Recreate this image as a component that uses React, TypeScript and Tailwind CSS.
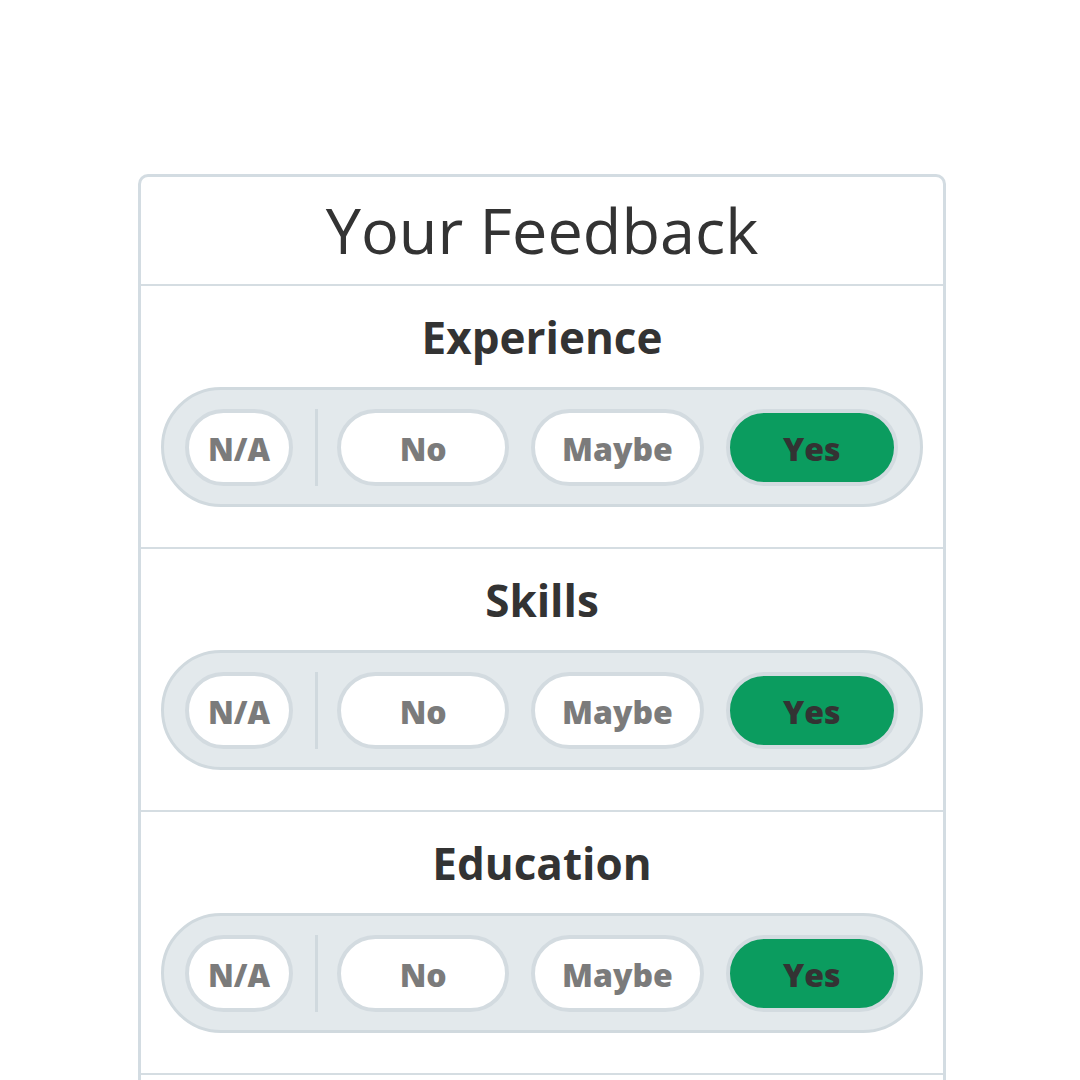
const options = ['No', 'Maybe', 'Yes'];

function Choice({ label, active }: { label: string; active?: boolean }) {
  return (
    <div
      className={
        'flex h-[77px] flex-1 items-center justify-center rounded-full border-4 border-[#d3dbe0] pt-[4px] text-[32px] font-extrabold ' +
        (active ? 'bg-[#0b9c5f] text-[#333333]' : 'bg-white text-[#7b7b7b]')
      }
    >
      {label}
    </div>
  );
}

function Question({ title }: { title: string }) {
  return (
    <section className="flex flex-col items-center border-b-2 border-[#d5dde2] pt-[25px] pb-[40px]">
      <h2 className="text-[44px] leading-[53px] font-bold text-[#333333]">{title}</h2>
      <div className="mt-[23px] flex h-[120px] w-[762px] items-center rounded-full border-[3px] border-[#d0d9de] bg-[#e3e9ec] pr-[22px] pl-[21px]">
        <div className="flex h-[77px] w-[108px] items-center justify-center rounded-full border-4 border-[#d3dbe0] bg-white pt-[4px] text-[31px] font-extrabold text-[#7b7b7b]">
          N/A
        </div>
        <div className="mr-[19px] ml-[22px] h-[77px] w-[3px] bg-[#d0d9de]" />
        <div className="flex flex-1 gap-[22px]">
          {options.map((o) => (
            <Choice key={o} label={o} active={o === 'Yes'} />
          ))}
        </div>
      </div>
    </section>
  );
}

export default function App() {
  return (
    <main
      className="h-[1080px] overflow-hidden bg-white pt-[174px]"
      style={{ fontFamily: '"Open Sans", "Noto Sans", sans-serif' }}
    >
      <div className="ml-[138px] w-[808px] rounded-t-[10px] border-[3px] border-b-0 border-[#d3dce2]">
        <header className="flex h-[109px] items-center justify-center border-b-2 border-[#d5dde2]">
          <h1 className="text-[63px] text-[#333333]">Your Feedback</h1>
        </header>
        <Question title="Experience" />
        <Question title="Skills" />
        <Question title="Education" />
        <div className="h-[120px]" />
      </div>
    </main>
  );
}
